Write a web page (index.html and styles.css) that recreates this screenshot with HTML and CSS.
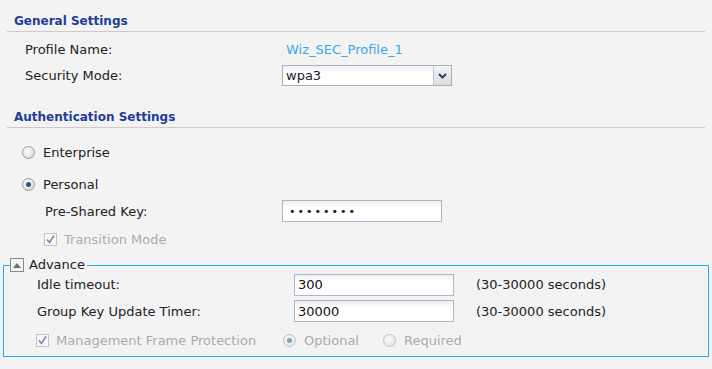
FILE: index.html
```html
<!DOCTYPE html>
<html>
<head>
  <title>Security Profile</title>
  <link rel="stylesheet" href="styles.css">
</head>
<body>

  <h2 class="section-title first">General Settings</h2>
  <div class="row first-row">
    <span class="label">Profile Name:</span>
    <span class="value-link">Wiz_SEC_Profile_1</span>
  </div>
  <div class="row">
    <span class="label">Security Mode:</span>
    <div class="select">
      <span class="select-text">wpa3</span>
      <span class="select-btn">
        <svg width="9" height="6" viewBox="0 0 9 6"><path d="M1 1 L4.5 4.5 L8 1" fill="none" stroke="#2b3f78" stroke-width="2"/></svg>
      </span>
    </div>
  </div>

  <h2 class="section-title">Authentication Settings</h2>
  <div class="radio-row top">
    <span class="radio"></span>
    <span>Enterprise</span>
  </div>
  <div class="radio-row">
    <span class="radio checked"></span>
    <span>Personal</span>
  </div>
  <div class="row sub">
    <span class="label">Pre-Shared Key:</span>
    <input class="text-input" type="password" value="12345678">
  </div>
  <div class="check-row sub disabled">
    <span class="checkbox"><svg width="11" height="11" viewBox="0 0 11 11"><path d="M2 5.5 L4.5 8.5 L9 1.5" fill="none" stroke="#7d86b8" stroke-width="1.6"/></svg></span>
    <span>Transition Mode</span>
  </div>

  <fieldset class="advance">
    <legend>
      <span class="toggle"><svg width="8" height="5" viewBox="0 0 8 5"><path d="M0 5 L4 0 L8 5 Z" fill="#6f6f6f"/></svg></span>
      <span>Advance</span>
    </legend>
    <div class="row inner first-inner">
      <span class="label">Idle timeout:</span>
      <input class="text-input" type="text" value="300">
      <span class="hint">(30-30000 seconds)</span>
    </div>
    <div class="row inner">
      <span class="label">Group Key Update Timer:</span>
      <input class="text-input" type="text" value="30000">
      <span class="hint">(30-30000 seconds)</span>
    </div>
    <div class="check-row inner disabled">
      <span class="checkbox"><svg width="11" height="11" viewBox="0 0 11 11"><path d="M2 5.5 L4.5 8.5 L9 1.5" fill="none" stroke="#7d86b8" stroke-width="1.6"/></svg></span>
      <span class="mfp-label">Management Frame Protection</span>
      <span class="radio checked faded"></span>
      <span class="opt-label">Optional</span>
      <span class="radio faded"></span>
      <span>Required</span>
    </div>
  </fieldset>

</body>
</html>
```

FILE: styles.css
```css
body {
  margin: 0;
  background: #f3f3f3;
  font-family: "DejaVu Sans", sans-serif;
  font-size: 13px;
  color: #222;
}
.section-title {
  margin: 0 7px;
  padding: 13px 0 2px 7px;
  line-height: 16px;
  font-size: 12px;
  font-weight: bold;
  color: #1f3d96;
  border-bottom: 1px solid #cbcbcb;
}
.section-title:not(.first) {
  padding-top: 20px;
}
.row {
  display: flex;
  align-items: center;
  height: 27px;
  padding-left: 25px;
}
.row.first-row {
  margin-top: 4px;
  height: 26px;
}
.label {
  width: 257px;
  flex-shrink: 0;
}
.row.sub {
  padding-left: 45px;
  height: 22px;
}
.row.sub .label {
  width: 237px;
}
.value-link {
  padding-left: 4px;
  color: #3aa8ea;
}
.select {
  display: flex;
  width: 168px;
  height: 19px;
  border: 1px solid #a9aec4;
  background: linear-gradient(#eef0f2, #fff 40%);
}
.select-text {
  flex: 1;
  padding-left: 3px;
  line-height: 19px;
}
.select-btn {
  width: 17px;
  display: flex;
  align-items: center;
  justify-content: center;
  border-left: 1px solid #c4c7d2;
  background: linear-gradient(#f4f4f4, #dcdcdc);
}
.radio-row {
  display: flex;
  align-items: center;
  height: 32px;
  padding-left: 22px;
}
.radio-row.top {
  margin-top: 8px;
}
.radio {
  width: 11px;
  height: 11px;
  border-radius: 50%;
  border: 1px solid #9a9a9a;
  background: radial-gradient(circle at 40% 35%, #fff, #d0d0d0);
  margin-right: 8px;
  position: relative;
  flex-shrink: 0;
}
.radio.checked::after {
  content: "";
  position: absolute;
  left: 3px;
  top: 3px;
  width: 5px;
  height: 5px;
  border-radius: 50%;
  background: #1b5d8f;
}
.radio.faded {
  opacity: 0.55;
}
.text-input {
  box-sizing: border-box;
  width: 160px;
  height: 22px;
  margin: 0;
  padding: 0 3px;
  border: 1px solid #b0b4c6;
  background: linear-gradient(#eceef0, #fff 35%);
  font-family: "DejaVu Sans", sans-serif;
  font-size: 13px;
  color: #111;
  outline: none;
}
.text-input[type=password] {
  padding-left: 6px;
  font-size: 11px;
  letter-spacing: 2px;
}
.check-row {
  display: flex;
  align-items: center;
  height: 26px;
}
.check-row.sub {
  padding-left: 44px;
  height: 34px;
}
.checkbox {
  box-sizing: border-box;
  width: 13px;
  height: 13px;
  border: 1px solid #c4c4c4;
  background: #f8f8f8;
  display: flex;
  align-items: center;
  justify-content: center;
  margin-right: 7px;
  flex-shrink: 0;
}
.disabled {
  color: #ababab;
}
.advance {
  margin: 1px 3px 0;
  padding: 0;
  border: 1px solid #1cb0ec;
  min-width: 0;
}
.advance legend {
  display: flex;
  align-items: center;
  margin-left: 6px;
  padding: 0 2px 0 0;
  line-height: 16px;
}
.toggle {
  box-sizing: border-box;
  width: 14px;
  height: 14px;
  border: 1px solid #8a8a8a;
  display: flex;
  align-items: center;
  justify-content: center;
  margin-right: 5px;
}
.row.inner {
  padding-left: 33px;
  height: 28px;
}
.row.first-inner {
  margin-top: -1px;
  height: 25px;
}
.hint {
  margin-left: 22px;
}
.check-row.inner {
  padding-left: 32px;
  height: 31px;
}
.mfp-label {
  width: 227px;
}
.opt-label {
  width: 79px;
}
```
